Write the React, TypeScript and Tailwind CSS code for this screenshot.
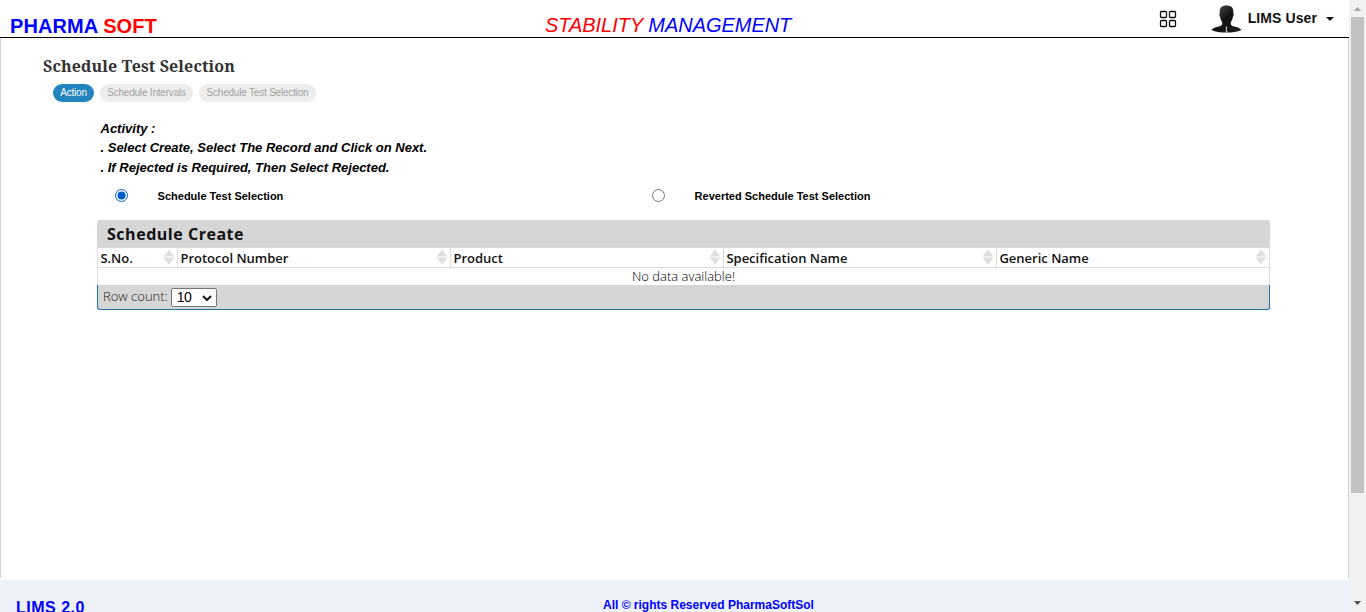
import type { ReactNode } from "react";

function Sorter() {
  return (
    <svg className="mr-[2px] shrink-0" width="12" height="16" viewBox="0 0 12 16" fill="#dfdfdf">
      <path d="M6 0.500L11.500 7.500H.5zM.5 8.500h11L6 15.500z" />
    </svg>
  );
}

function HeadCell({ children }: { children: ReactNode }) {
  return (
    <div className="flex h-[19px] items-center justify-between border-r border-[#dddddd] pl-[2.4px] font-['Open_Sans',sans-serif] text-[13px] leading-[19px] font-semibold whitespace-nowrap text-[#111]">
      <span className="relative top-px">{children}</span>
      <Sorter />
    </div>
  );
}

function Header() {
  return (
    <header className="grid h-[38px] grid-cols-[535px_1fr_auto] border-b border-black">
      <div className="pt-[14px] pl-[10px] text-[20px] leading-[24px] font-bold tracking-[0.08px] whitespace-nowrap text-[#0000ff]">
        PHARMA <span className="text-[#ff0000]">SOFT</span>
      </div>
      <div className="pt-[13px] pl-[10px] text-[20px] leading-[24px] tracking-[-0.04px] whitespace-nowrap text-[#0000ff] italic">
        <span className="text-[#ff0000]">STABILITY</span> MANAGEMENT
      </div>
      <div className="flex h-[37px] items-center pr-[15px]">
        <svg className="mr-[34px]" width="18" height="18" viewBox="0 0 18 18" fill="none" stroke="#111" strokeWidth="1.3">
          <rect x="1.5" y="1.5" width="6" height="6" rx="1" />
          <rect x="10.5" y="1.5" width="6" height="6" rx="1" />
          <rect x="1.5" y="10.5" width="6" height="6" rx="1" />
          <rect x="10.5" y="10.5" width="6" height="6" rx="1" />
        </svg>
        <svg className="mr-[6px]" width="31" height="28" viewBox="0 0 31 28">
          <defs>
            <linearGradient id="suit" x1="0" y1="0" x2="1" y2="1">
              <stop offset="0" stopColor="#555" />
              <stop offset="0.5" stopColor="#111" />
              <stop offset="1" stopColor="#222" />
            </linearGradient>
          </defs>
          <path
            fill="url(#suit)"
            d="M15.500 0.500C20 0.500 22.300 2.500 22.300 6.500v2c.6.600.5 2-.3 3-.4 2.500-1.200 4.300-2.200 5.500v2.500l1.200 1.200c3 1.200 7.900 1.600 9.500 4.300-4 2.200-9.200 2.500-15 2.500S4.500 27.200.5 25c1.600-2.700 6.500-3.100 9.500-4.300l1.200-1.200V17c-1-1.200-1.800-3-2.200-5.500-.8-1-.9-2.400-.3-3v-2C8.700 2.500 11 0.500 15.500 0.500z"
          />
          <path fill="#bbb" d="M15 21.500h1l.3 1-.3.800.4 4.200h-1.800l.4-4.200-.3-.8z" />
        </svg>
        <span className="relative -top-px text-[14px] leading-[18px] font-bold tracking-[0.1px] whitespace-nowrap text-[#111]">LIMS User</span>
        <svg className="ml-[9px]" width="8" height="4" viewBox="0 0 8 4" fill="#111">
          <path d="M0 0h8L4 4z" />
        </svg>
      </div>
    </header>
  );
}

function Choice({ checked, label }: { checked?: boolean; label: string }) {
  return (
    <label className="flex items-center">
      <svg width="13" height="13" viewBox="0 0 13 13">
        <circle cx="6.500" cy="6.500" r="6" fill="#fff" stroke={checked ? "#0b63ce" : "#767676"} />
        {checked && <circle cx="6.500" cy="6.500" r="4" fill="#005fcc" />}
      </svg>
      <span className="ml-[29.6px] text-[11px] leading-[14px] font-bold whitespace-nowrap text-black">{label}</span>
    </label>
  );
}

function ScheduleTable() {
  return (
    <section className="mt-[17px] ml-[96px] w-[1173px]">
      <h2 className="h-[27px] rounded-t-[3px] bg-[#d6d6d6] pl-[10px] font-['Open_Sans',sans-serif] text-[16px] leading-[28px] font-bold tracking-[0.53px] text-[#111]">
        Schedule Create
      </h2>
      <div className="border-l border-[#dddddd]">
        <div className="grid grid-cols-[80px_273px_273px_273px_273px] border-y border-[#dddddd]">
          <HeadCell>S.No.</HeadCell>
          <HeadCell>Protocol Number</HeadCell>
          <HeadCell>Product</HeadCell>
          <HeadCell>Specification Name</HeadCell>
          <HeadCell>Generic Name</HeadCell>
        </div>
        <div className="h-[17px] border-r border-[#dddddd] text-center font-['Open_Sans',sans-serif] text-[13px] leading-[17px] font-light text-black">
          No data available!
        </div>
      </div>
      <div className="flex h-[25px] items-center rounded-b-[3px] border-x border-b border-[#2271a3] bg-[#d6d6d6] pl-[5px]">
        <span className="relative -top-px font-['Open_Sans',sans-serif] text-[13px] leading-[18px] font-light whitespace-nowrap text-[#222]">Row count:</span>
        <div className="relative top-px ml-[3px] flex h-[19px] w-[46px] items-center justify-between rounded-[2px] border border-[#767676] bg-white pr-[4px] pl-[5px] text-[14px] leading-[17px] tracking-[-0.5px] text-black">
          <span>10</span>
          <svg width="10" height="6" viewBox="0 0 10 6" fill="none" stroke="#111" strokeWidth="2">
            <path d="M1 1l4 4 4-4" />
          </svg>
        </div>
      </div>
    </section>
  );
}

function Scrollbar() {
  return (
    <aside className="flex h-[612px] w-[17px] flex-col items-center bg-[#f1f1f1]">
      <svg width="17" height="17" viewBox="0 0 17 17" fill="#a3a3a3">
        <path d="M5 11h7L8.500 7z" />
      </svg>
      <div className="h-[476px] w-[13px] bg-[#c1c1c1]" />
      <svg className="mt-auto" width="17" height="17" viewBox="0 0 17 17" fill="#505050">
        <path d="M5 6h7L8.500 10z" />
      </svg>
    </aside>
  );
}

export default function App() {
  return (
    <div className="flex h-[612px] w-[1366px] overflow-hidden bg-white font-['Liberation_Sans',Arial,sans-serif]">
      <div className="flex w-[1349px] flex-col">
        <Header />
        <main className="h-[540px] border-x border-[#d3d3d3]">
          <h1 className="pt-[17px] pl-[42px] font-['Noto_Serif','Droid_Serif','DejaVu_Serif_Condensed','DejaVu_Serif',serif] text-[16px] leading-[22px] font-bold tracking-[0.13px] whitespace-nowrap text-[#333]">
            Schedule Test Selection
          </h1>
          <nav className="mt-[7px] ml-[52px] flex h-[18px] gap-[6px] text-[10px] leading-[18px] tracking-[-0.2px] whitespace-nowrap text-[#a3a3a3]">
            <span className="w-[41px] rounded-full bg-[#2184be] text-center text-white">Action</span>
            <span className="w-[93px] rounded-full bg-[#ededed] text-center">Schedule Intervals</span>
            <span className="w-[117px] rounded-full bg-[#ededed] text-center">Schedule Test Selection</span>
          </nav>
          <div className="mt-[17px] ml-[99.5px] text-[13px] leading-[19.500px] font-bold whitespace-nowrap text-black italic">
            <p className="h-[19px] leading-[19px]">Activity :</p>
            <p className="h-[20px] leading-[19px]">. Select Create, Select The Record and Click on Next.</p>
            <p>. If Rejected is Required, Then Select Rejected.</p>
          </div>
          <div className="mt-[11px] ml-[114px] grid grid-cols-[537px_1fr]">
            <Choice checked label="Schedule Test Selection" />
            <Choice label="Reverted Schedule Test Selection" />
          </div>
          <ScheduleTable />
        </main>
        <footer className="mt-[2px] flex h-[32px] overflow-hidden bg-[#ecf1fa] font-bold text-[#0000ff]">
          <div className="w-[603px] pt-[19px] pl-[16px] text-[16px] leading-[18px] tracking-[0.5px]">LIMS 2.0</div>
          <div className="pt-[17px] text-[12px] leading-[16px] whitespace-nowrap">All © rights Reserved PharmaSoftSol</div>
        </footer>
      </div>
      <Scrollbar />
    </div>
  );
}
